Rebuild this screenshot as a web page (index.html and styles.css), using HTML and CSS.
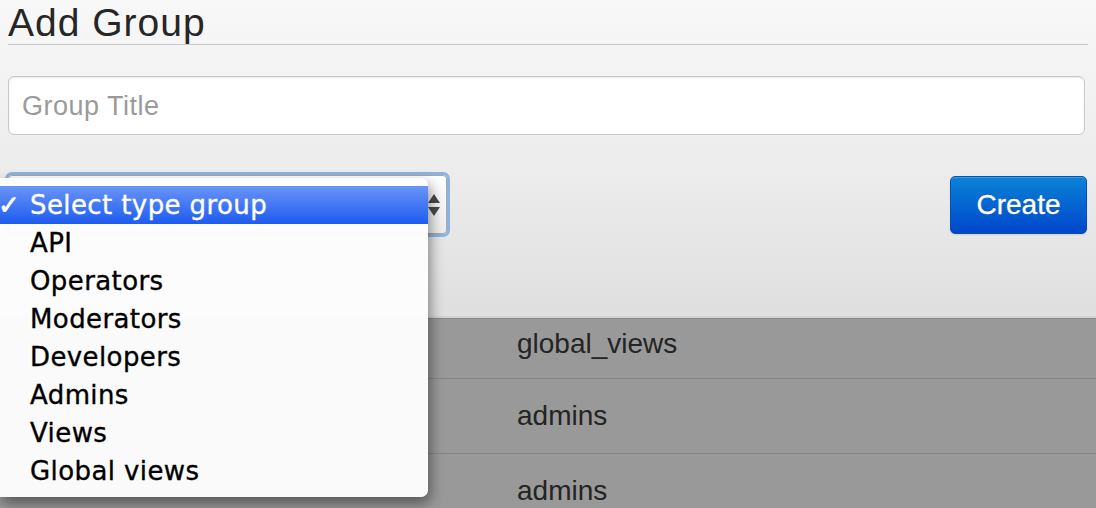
FILE: index.html
```html
<!DOCTYPE html>
<html>
<head>
<meta charset="utf-8">
<link rel="stylesheet" href="styles.css">
</head>
<body>
<div class="panel">
  <h1 class="title">Add Group</h1>
  <div class="field"><span class="placeholder">Group Title</span></div>
  <div class="actions">
    <div class="select">
      <svg class="arrows" width="12" height="26" viewBox="0 0 12 26"><path d="M6 2 L12 11 L0 11 Z" fill="#4a4a4a"/><path d="M0 15 L12 15 L6 24 Z" fill="#4a4a4a"/></svg>
    </div>
    <button class="btn">Create</button>
  </div>
</div>
<div class="table">
  <div class="row row-first"><span class="cell">global_views</span></div>
  <div class="row"><span class="cell">admins</span></div>
  <div class="row"><span class="cell">admins</span></div>
</div>
<ul class="menu">
  <li class="item selected"><span class="check">✓</span>Select type group</li>
  <li class="item">API</li>
  <li class="item">Operators</li>
  <li class="item">Moderators</li>
  <li class="item">Developers</li>
  <li class="item">Admins</li>
  <li class="item">Views</li>
  <li class="item">Global views</li>
</ul>
</body>
</html>
```
FILE: styles.css
```css
html, body {
  margin: 0;
  padding: 0;
  height: 508px;
  overflow: hidden;
}
body {
  font-family: "Liberation Sans", Arial, sans-serif;
  background: #999;
  position: relative;
}
.panel {
  height: 316px;
  padding: 0 8px;
  background: linear-gradient(#f8f8f8 0%, #ececec 55%, #dfdfdf 100%);
  border-bottom: 2px solid #d3d3d3;
}
.title {
  margin: 0;
  padding-top: 2px;
  font-size: 39px;
  letter-spacing: 1px;
  line-height: 42px;
  font-weight: normal;
  color: #262626;
  border-bottom: 1px solid #c8c8c8;
}
.field {
  margin-top: 31px;
  margin-right: 3px;
  height: 57px;
  border: 1px solid #c9c9c9;
  border-radius: 6px;
  background: #fff;
  box-shadow: inset 0 1px 2px rgba(0,0,0,0.1);
  display: flex;
  align-items: center;
  padding-left: 13px;
}
.placeholder {
  font-size: 27px;
  letter-spacing: 0.5px;
  color: #9a9a9a;
  padding-top: 1px;
}
.actions {
  margin-top: 40px;
  display: flex;
  justify-content: space-between;
  align-items: flex-start;
}
.select {
  width: 437px;
  height: 57px;
  border: 1px solid #a9a9a9;
  border-radius: 4px;
  background: linear-gradient(#ffffff, #ececec);
  box-shadow: 0 0 0 3px rgba(110, 160, 220, 0.75);
  display: flex;
  align-items: center;
  justify-content: flex-end;
}
.arrows {
  margin-right: 6px;
}
.btn {
  margin-top: 1px;
  margin-right: 1px;
  width: 137px;
  height: 58px;
  border: 1px solid #0a4fb5;
  border-radius: 5px;
  background: linear-gradient(#0a83d6, #0046cc);
  color: #fff;
  font-family: "Liberation Sans", Arial, sans-serif;
  font-size: 28px;
  -webkit-text-stroke: 0.3px #fff;
  text-shadow: 0 -1px 0 rgba(0,0,0,0.25);
  box-shadow: inset 0 1px 0 rgba(255,255,255,0.2), 0 1px 2px rgba(0,0,0,0.1);
  padding: 0;
}
.table {
  border-top: 1px solid #878787;
}
.row {
  height: 53px;
  padding-top: 21px;
  border-bottom: 1px solid #858585;
  padding-left: 517px;
}
.row-first {
  height: 50px;
  padding-top: 9px;
}
.cell {
  font-size: 28px;
  line-height: 32px;
  color: #242424;
  display: block;
}
.menu {
  position: absolute;
  left: 0;
  top: 178px;
  width: 428px;
  margin: 0;
  padding: 8px 0 7px;
  list-style: none;
  background: rgba(252,252,252,0.98);
  border-radius: 0 7px 7px 0;
  box-shadow: 2px 6px 14px rgba(0,0,0,0.45);
  font-family: "DejaVu Sans", Verdana, sans-serif;
}
.item {
  position: relative;
  height: 38px;
  line-height: 38px;
  padding-left: 30px;
  font-size: 26px;
  letter-spacing: 0.4px;
  color: #000;
  -webkit-text-stroke: 0.35px currentColor;
}
.item.selected {
  background: linear-gradient(#6a94f7, #1d5cf0);
  color: #fff;
}
.check {
  position: absolute;
  left: -2px;
  top: 0;
  -webkit-text-stroke: 0.8px currentColor;
}
```
